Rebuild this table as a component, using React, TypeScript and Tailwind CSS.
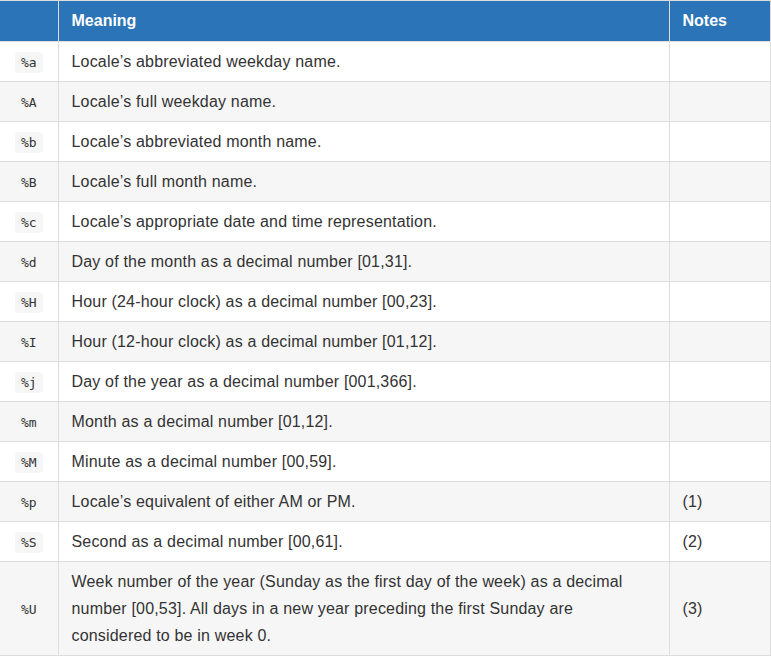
const rows: [string, string, string][] = [
  ['%a', 'Locale’s abbreviated weekday name.', ''],
  ['%A', 'Locale’s full weekday name.', ''],
  ['%b', 'Locale’s abbreviated month name.', ''],
  ['%B', 'Locale’s full month name.', ''],
  ['%c', 'Locale’s appropriate date and time representation.', ''],
  ['%d', 'Day of the month as a decimal number [01,31].', ''],
  ['%H', 'Hour (24-hour clock) as a decimal number [00,23].', ''],
  ['%I', 'Hour (12-hour clock) as a decimal number [01,12].', ''],
  ['%j', 'Day of the year as a decimal number [001,366].', ''],
  ['%m', 'Month as a decimal number [01,12].', ''],
  ['%M', 'Minute as a decimal number [00,59].', ''],
  ['%p', 'Locale’s equivalent of either AM or PM.', '(1)'],
  ['%S', 'Second as a decimal number [00,61].', '(2)'],
  [
    '%U',
    'Week number of the year (Sunday as the first day of the week) as a decimal number [00,53]. All days in a new year preceding the first Sunday are considered to be in week 0.',
    '(3)',
  ],
];

export default function App() {
  return (
    <div className="border-t border-[#ddd] bg-white font-['Liberation_Sans',Arial,sans-serif] text-[16px] leading-[27px] tracking-[0.18px] text-[#333]">
      <table className="w-[770px] table-fixed border-collapse">
        <colgroup>
          <col className="w-[58px]" />
          <col className="w-[611px]" />
          <col className="w-[101px]" />
        </colgroup>
        <thead>
          <tr className="h-[40px] bg-[#2a74b7] text-white">
            <th className="border-r border-[#ddd] px-[13px]" />
            <th className="border-r border-[#ddd] px-[13px] text-left font-bold tracking-normal">Meaning</th>
            <th className="border-r border-[#ddd] px-[13px] text-left font-bold tracking-normal">Notes</th>
          </tr>
        </thead>
        <tbody>
          {rows.map(([code, meaning, note], i) => (
            <tr key={code} className={i % 2 === 0 ? 'bg-white' : 'bg-[#f6f6f6]'}>
              <td className="h-[40px] border border-l-0 border-[#ddd] text-center">
                <code className="inline-block rounded-[4px] bg-[#f6f6f6] px-[6px] align-middle font-['DejaVu_Sans_Mono',monospace] text-[13px] leading-[21px] tracking-normal text-[#333]">
                  {code}
                </code>
              </td>
              <td className="border border-[#ddd] px-[13px] py-[6px]">{meaning}</td>
              <td className="border border-[#ddd] px-[13px] py-[6px]">{note}</td>
            </tr>
          ))}
        </tbody>
      </table>
    </div>
  );
}
